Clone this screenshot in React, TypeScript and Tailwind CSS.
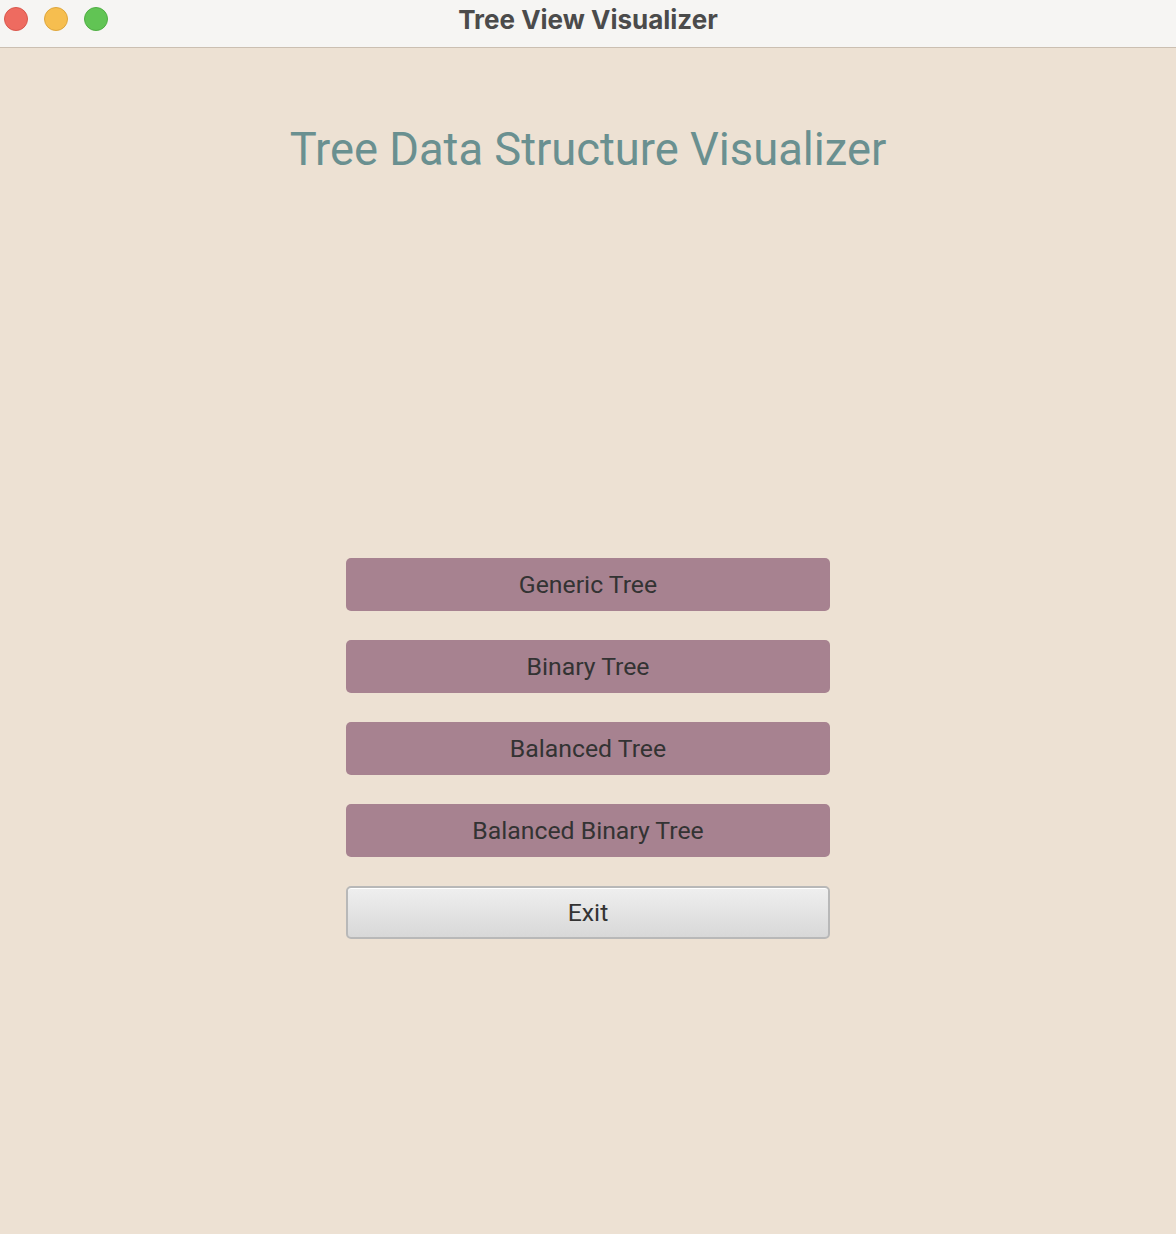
import React from "react";

export default function App() {
  const btns = ["Generic Tree", "Binary Tree", "Balanced Tree", "Balanced Binary Tree"];
  return (
    <div className="w-[1176px] h-[1234px] bg-[#ede1d3] flex flex-col" style={{ fontFamily: "Roboto, 'Noto Sans', sans-serif" }}>
      <div className="h-[48px] bg-[#f6f5f3] border-b border-[#cbbfb1] flex items-start pt-[7px] relative shrink-0">
        <div className="flex items-center gap-[16px] pl-[4px]">
          <div className="w-[24px] h-[24px] rounded-full bg-[#ee6b60] border border-[#d9574c]" />
          <div className="w-[24px] h-[24px] rounded-full bg-[#f6be4f] border border-[#dea63c]" />
          <div className="w-[24px] h-[24px] rounded-full bg-[#61c454] border border-[#4fae43]" />
        </div>
        <div
          className="absolute left-0 right-0 top-0 h-[38px] flex items-center justify-center text-[26px] font-bold text-[#4b4b4b] pointer-events-none"
          style={{ fontFamily: "Inter, 'Noto Sans', sans-serif" }}
        >
          Tree View Visualizer
        </div>
      </div>
      <div className="flex flex-col items-center">
        <h1 className="mt-[74px] text-[45.3px] leading-[56px] text-[#6a9090] font-normal">
          Tree Data Structure Visualizer
        </h1>
        <div className="mt-[380px] flex flex-col gap-[29px]">
          {btns.map((b) => (
            <div key={b} className="w-[484px] h-[53px] rounded-[5px] bg-[#a78290] flex items-center justify-center text-[24.8px] text-[#333333]">
              {b}
            </div>
          ))}
          <div className="w-[484px] h-[53px] rounded-[5px] border-2 border-[#b8b8b8] bg-gradient-to-b from-[#efefef] to-[#d8d8d8] shadow-[inset_0_1px_0_#ffffff] flex items-center justify-center text-[24.8px] text-[#333333]">
            Exit
          </div>
        </div>
      </div>
    </div>
  );
}
